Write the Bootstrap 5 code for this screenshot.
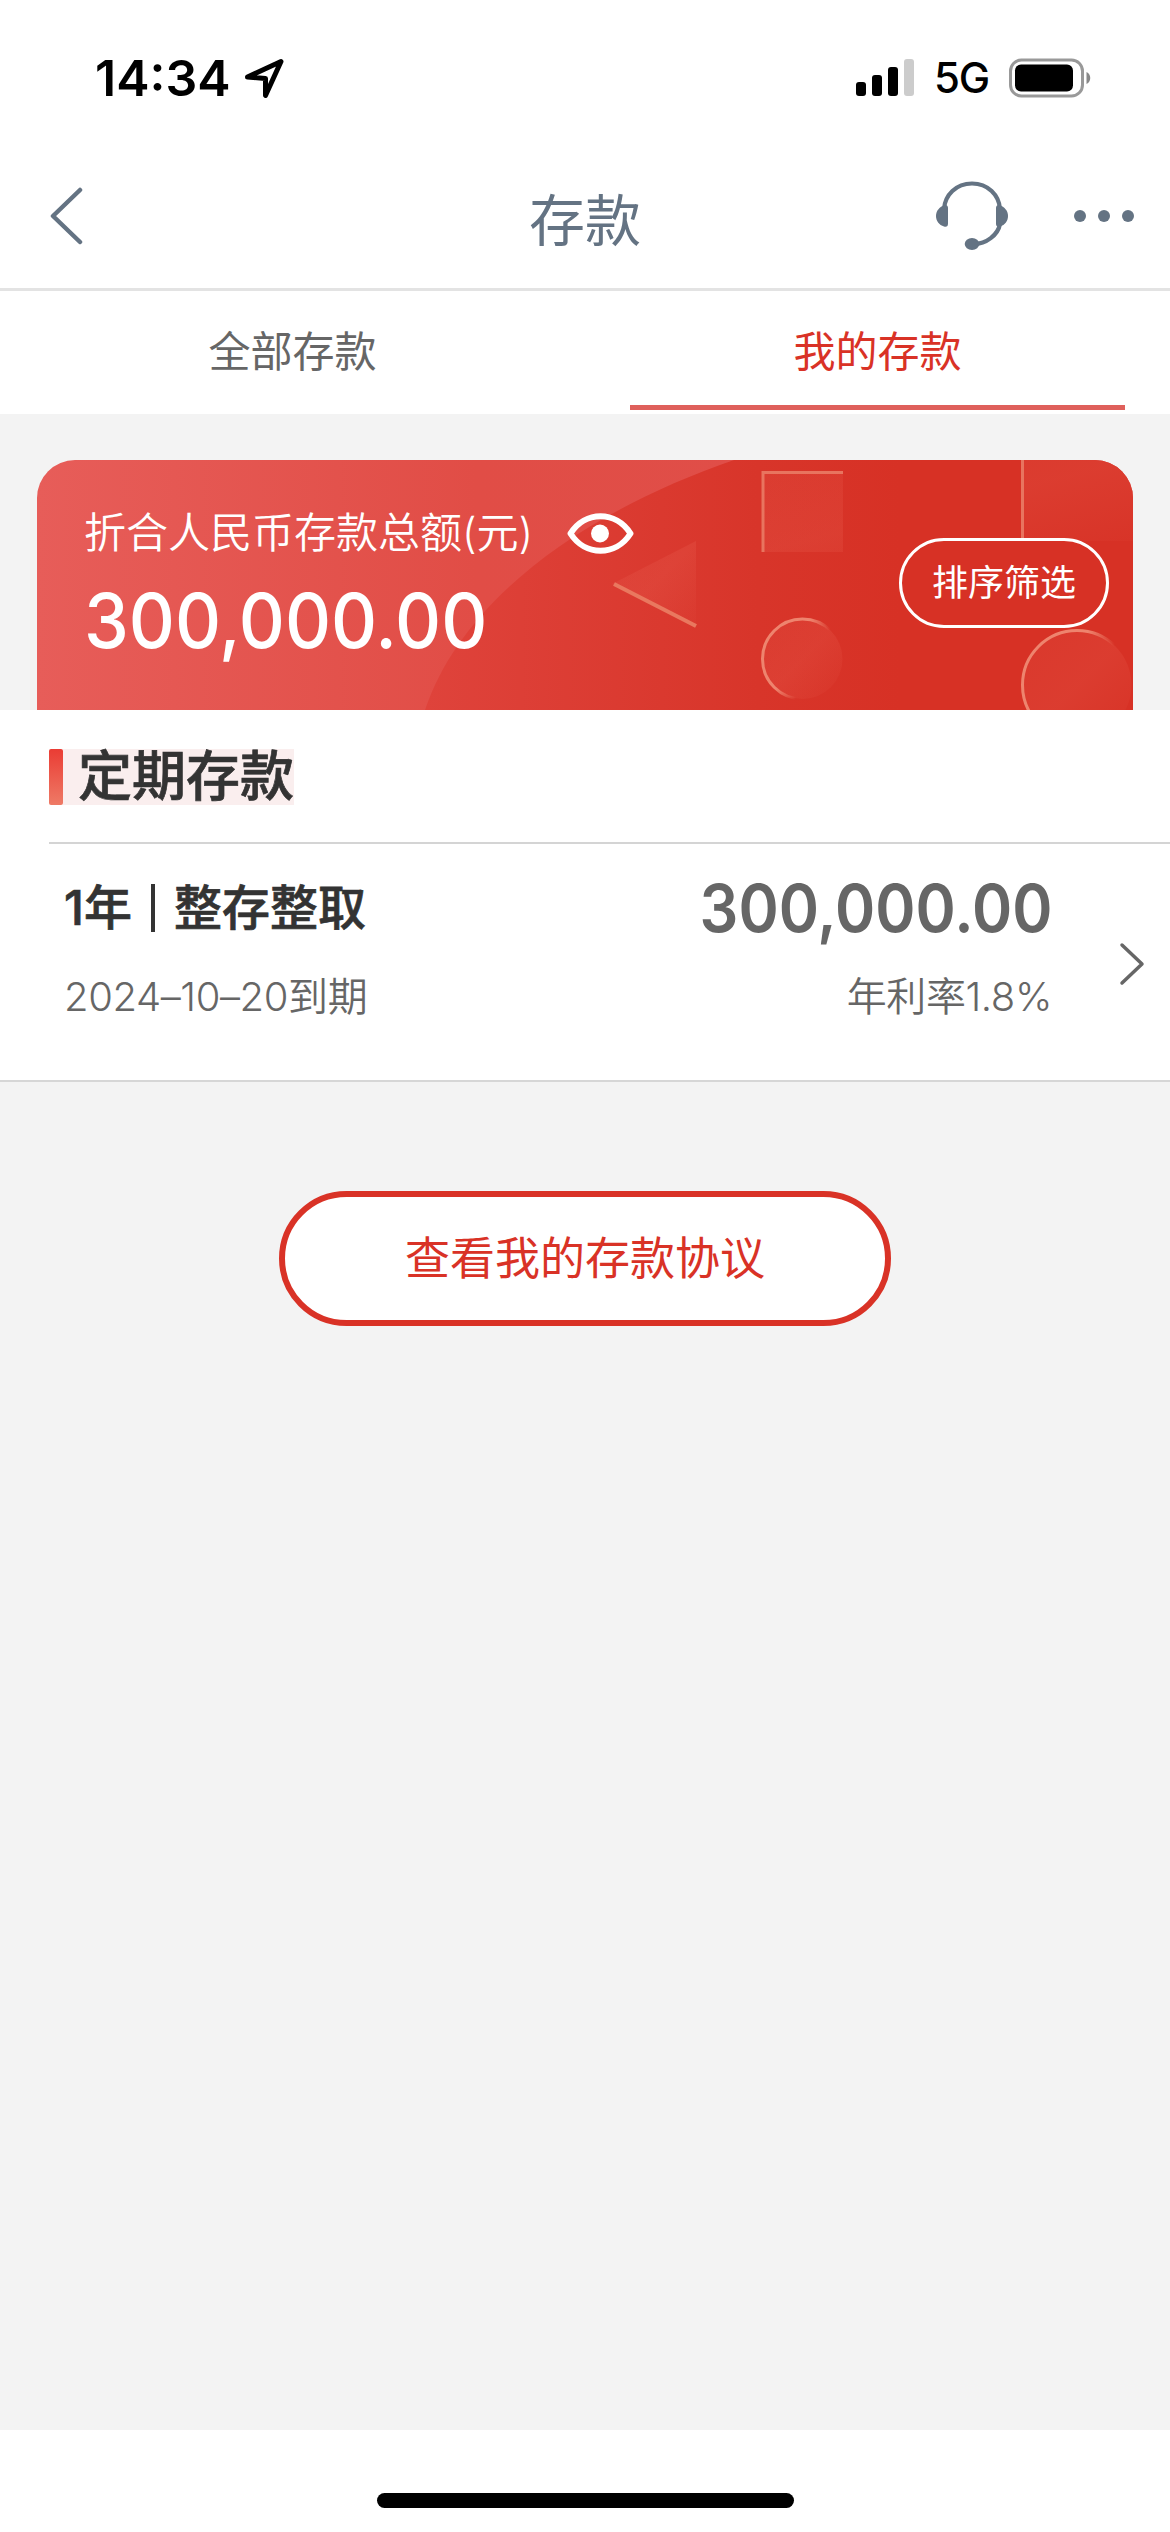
<!DOCTYPE html>
<html lang="zh-CN">
<head>
<meta charset="utf-8">
<meta name="viewport" content="width=device-width, initial-scale=1">
<title>存款</title>
<link rel="stylesheet" href="https://cdn.jsdelivr.net/npm/bootstrap@5.3.0/dist/css/bootstrap.min.css">
<style>
  :root { --brand: #d93226; --slate: #647383; }
  body { font-family: Inter, "Noto Sans CJK SC", sans-serif; background: #f3f3f3; height: 2532px; color: #333; overflow: hidden; }
  svg { display: block; flex: none; }
  .status-bar { height: 135px; padding: 21px 78px 0 95px; color: #000; }
  .clock { font-size: 50px; font-weight: 600; line-height: 60px; width: 149px; }
  .network { font-size: 42px; font-weight: 500; line-height: 60px; width: 92px; padding-left: 18px; letter-spacing: -1.2px; }
  .title-bar { height: 156px; border-bottom: 3px solid #e3e3e3; padding: 0 36px 0 49px; color: var(--slate); }
  .title-bar .side-start { width: 189px; padding-top: 51px; }
  .title-bar .side-end { width: 202px; padding-top: 43px; }
  .page-title { font-size: 56px; line-height: 60px; font-weight: 400; margin: 56px 0 0; }
  .tabs { height: 123px; font-size: 42px; color: #666; }
  .tabs .nav-link { color: #666; border-radius: 0; padding: 31px 0 0; line-height: 60px; height: 123px; }
  .tabs .nav-link.active { color: var(--brand); }
  .tabs .nav-link.active::after { content: ""; display: block; width: 495px; height: 5px; margin: 23px auto 0; background: #df605b; }
  .summary { margin: 46px 37px 0; height: 250px; border-radius: 38px 38px 0 0; color: #fff; overflow: hidden; }
  .summary-art { position: absolute; inset: 0; }
  .summary-body { padding: 43px 24px 0 47px; }
  .summary-label { font-size: 42px; line-height: 60px; font-weight: 350; }
  .eye-icon { margin-left: 34px; }
  .summary-total { font-size: 76px; line-height: 90px; font-weight: 500; margin-top: 12px; transform: scaleX(.94); transform-origin: left; }
  .btn-sort { width: 210px; height: 90px; margin-top: 35px; padding: 0; border: 3px solid #fff; color: #fff; background: #d73125; font-size: 36px; line-height: 80px; font-weight: 400; }
  .sheet { height: 372px; border-bottom: 2px solid #d6d6d6; }
  .section-head { height: 134px; margin-left: 49px; padding-top: 39px; border-bottom: 2px solid #d4d4d4; }
  .section-bar { width: 14px; height: 56px; border-radius: 2px; background: linear-gradient(#ea3c34, #ee7a66); }
  .section-name { width: 231px; height: 56px; padding-left: 15px; background: #faeeee; font-size: 54px; line-height: 55px; font-weight: 500; margin: 0; white-space: nowrap; -webkit-text-stroke: .7px #333; }
  .deposit { padding: 28px 25px 0 64px; height: 236px; color: #666; }
  .deposit-name { font-size: 48px; line-height: 72px; font-weight: 500; color: #333; -webkit-text-stroke: .7px #333; }
  .name-rule { width: 4px; height: 48px; background: #333; margin: 0 19px; }
  .deposit-note { font-size: 40px; line-height: 60px; font-weight: 350; margin-top: 23px; letter-spacing: -.4px; }
  .deposit-amount { font-size: 66px; line-height: 72px; font-weight: 600; transform: scaleX(.925); transform-origin: right; }
  .deposit-info { width: 988px; }
  .deposit-arrow { margin-top: 47px; }
  .btn-agree { width: 612px; height: 135px; margin-top: 109px; border: 6px solid var(--brand); background: #fff; color: var(--brand); font-size: 45px; font-weight: 400; padding: 0; line-height: 121px; }
  .home-area { height: 102px; padding-top: 63px; }
  .home-pill { width: 417px; height: 15px; background: #000; }
</style>
<script src="https://cdn.jsdelivr.net/npm/bootstrap@5.3.0/dist/js/bootstrap.bundle.min.js"></script>
</head>
<body class="d-flex flex-column">
<header class="bg-white">
  <div class="status-bar d-flex justify-content-between">
    <div class="d-flex align-items-center">
      <span class="clock">14:34</span>
      <svg width="41" height="41" viewBox="0 0 41 41"><path d="M3.500 19 37 3.500 21.500 37.500V20.500Z" fill="none" stroke="#000" stroke-width="5" stroke-linejoin="round"/></svg>
    </div>
    <div class="d-flex align-items-center">
      <svg width="60" height="38" viewBox="0 0 60 38"><rect y="23" width="10" height="14" rx="3"/><rect x="16" y="16" width="10" height="21" rx="3"/><rect x="32" y="8" width="10" height="29" rx="3"/><rect x="48" width="10" height="37" rx="3" fill="#ccc"/></svg>
      <span class="network">5G</span>
      <svg width="84" height="40" viewBox="0 0 84 40"><rect x="2.500" y="2" width="72" height="36" rx="11" fill="none" stroke="#999" stroke-width="3"/><rect x="7" y="6.500" width="58" height="27" rx="6"/><path d="M78.500 14c5 2 5 10 0 12z" fill="#888"/></svg>
    </div>
  </div>
  <div class="title-bar d-flex justify-content-between align-items-start">
    <div class="side-start">
      <svg width="34" height="60" viewBox="0 0 34 60"><path d="M31 4 4 30 31 56" fill="none" stroke="#647383" stroke-width="4.500" stroke-linecap="round" stroke-linejoin="round"/></svg>
    </div>
    <h1 class="page-title">存款</h1>
    <div class="side-end">
      <svg width="202" height="76" viewBox="932 178 202 76" fill="none" stroke="#647383" stroke-width="4.200"><path d="M944 209C945 195 956 183.500 972 183.500S999 195 1000 209"/><path d="M1000 224C998 235 986 244 974 244"/><g fill="#647383" stroke="none"><path d="M948 208q0-3-3-3c-6 2-9 6-9 11s3 9 8 10.500q4 1 4-3z"/><path d="M996 208q0-3 3-3c6 2 9 6 9 11s-3 9-8 10.500q-4 1-4-3z"/><ellipse cx="972" cy="244" rx="7.300" ry="6"/><circle cx="1080" cy="216" r="6"/><circle cx="1104" cy="216" r="6"/><circle cx="1128" cy="216" r="6"/></g></svg>
    </div>
  </div>
  <nav class="tabs nav nav-justified">
    <a class="nav-link w-50" href="#">全部存款</a>
    <a class="nav-link w-50 active" href="#">我的存款</a>
  </nav>
</header>
<main class="flex-grow-1">
  <section class="summary position-relative">
    <svg class="summary-art" width="1096" height="250" viewBox="37 460 1096 250">
      <defs>
        <linearGradient id="base"><stop offset="0" stop-color="#e75d59"/><stop offset=".4" stop-color="#e14d46"/><stop offset=".65" stop-color="#e04e48"/></linearGradient>
        <linearGradient id="deep" gradientUnits="userSpaceOnUse" x1="425" x2="900" y1="0" y2="0"><stop offset="0" stop-color="#df433b"/><stop offset=".7" stop-color="#d8352a"/><stop offset="1" stop-color="#d73125"/></linearGradient>
        <linearGradient id="glass" x1="0" y1="0" x2="1" y2="1"><stop offset="0" stop-color="#f07060" stop-opacity=".12"/><stop offset=".5" stop-color="#f07060" stop-opacity=".18"/><stop offset="1" stop-color="#f07060" stop-opacity=".03"/></linearGradient>
        <linearGradient id="rim" x1="0" y1=".2" x2="1" y2=".7"><stop offset="0" stop-color="#ee846e"/><stop offset=".4" stop-color="#ee846e"/><stop offset=".65" stop-color="#ee846e" stop-opacity="0"/></linearGradient>
      </defs>
      <path fill="url(#base)" d="M37 460h1096v250H37z"/>
      <path fill="url(#deep)" d="M425 710C460 605 575 515 734 460H1133V710Z"/>
      <path fill="url(#glass)" d="M612 584 696 541V627Z"/>
      <path d="M614 584 696 626" stroke="#e9785f" stroke-width="4"/>
      <path fill="url(#glass)" d="M762 471h81v81h-81zM1022 460h111v81h-111z"/>
      <path d="M763 552V472.500H843" fill="none" stroke="#e8745f" stroke-width="3"/>
      <path d="M1022.500 460V541" stroke="#e8745f" stroke-width="3"/>
      <circle cx="802.500" cy="659" r="40" fill="url(#glass)" stroke="url(#rim)" stroke-width="3"/>
      <circle cx="1077" cy="685" r="54.500" fill="url(#glass)" stroke="url(#rim)" stroke-width="3"/>
    </svg>
    <div class="summary-body position-relative d-flex justify-content-between align-items-start">
      <div>
        <div class="d-flex align-items-center">
          <span class="summary-label">折合人民币存款总额(元)</span>
          <svg class="eye-icon" width="67" height="43" viewBox="0 0 67 43"><path d="M3.500 21.500C18-1.500 49-1.500 63.500 21.500 49 44.500 18 44.500 3.500 21.500Z" fill="none" stroke="#fff" stroke-width="6" stroke-linejoin="round"/><circle cx="33" cy="21.500" r="9" fill="#fff"/></svg>
        </div>
        <div class="summary-total">300,000.00</div>
      </div>
      <button class="btn btn-sort rounded-pill" type="button">排序筛选</button>
    </div>
  </section>
  <section class="sheet bg-white">
    <div class="section-head d-flex">
      <span class="section-bar"></span>
      <h2 class="section-name">定期存款</h2>
    </div>
    <a class="deposit d-flex justify-content-between text-decoration-none" href="#">
      <div class="deposit-info d-flex justify-content-between">
        <div>
          <div class="deposit-name d-flex align-items-center"><span>1年</span><span class="name-rule"></span><span>整存整取</span></div>
          <div class="deposit-note">2024–10–20到期</div>
        </div>
        <div class="text-end">
          <div class="deposit-amount">300,000.00</div>
          <div class="deposit-note">年利率1.8%</div>
        </div>
      </div>
      <svg class="deposit-arrow" width="26" height="86" viewBox="0 0 26 86"><path d="M3 26 23 45 3 64" fill="none" stroke="#666" stroke-width="3.500" stroke-linecap="round" stroke-linejoin="round"/></svg>
    </a>
  </section>
  <div class="text-center">
    <button class="btn btn-agree rounded-pill" type="button">查看我的存款协议</button>
  </div>
</main>
<footer class="home-area bg-white d-flex justify-content-center">
  <div class="home-pill rounded-pill"></div>
</footer>
</body>
</html>
